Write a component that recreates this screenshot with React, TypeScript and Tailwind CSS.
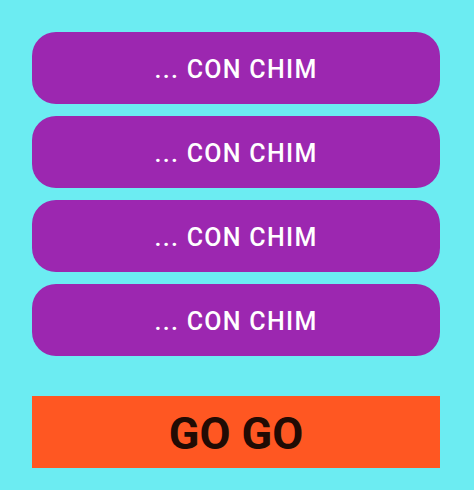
import React from "react";

export default function App() {
  const items = [0, 1, 2, 3];
  return (
    <div
      className="w-[474px] h-[490px] bg-[#6cecf2] pl-8 pr-[34px] pt-8 flex flex-col"
      style={{ fontFamily: "Roboto, sans-serif" }}
    >
      <div className="flex flex-col gap-3">
        {items.map((i) => (
          <div
            key={i}
            className="h-[72px] rounded-[24px] bg-[#9c27b0] flex items-center justify-center pt-[3px] text-white text-[25px] font-medium tracking-[1.3px]"
          >
            ... CON CHIM
          </div>
        ))}
      </div>
      <div className="mt-10 h-[72px] bg-[#ff5722] flex items-center justify-center pt-[3px] text-[#210b04] text-[45px] font-bold">
        GO GO
      </div>
    </div>
  );
}
